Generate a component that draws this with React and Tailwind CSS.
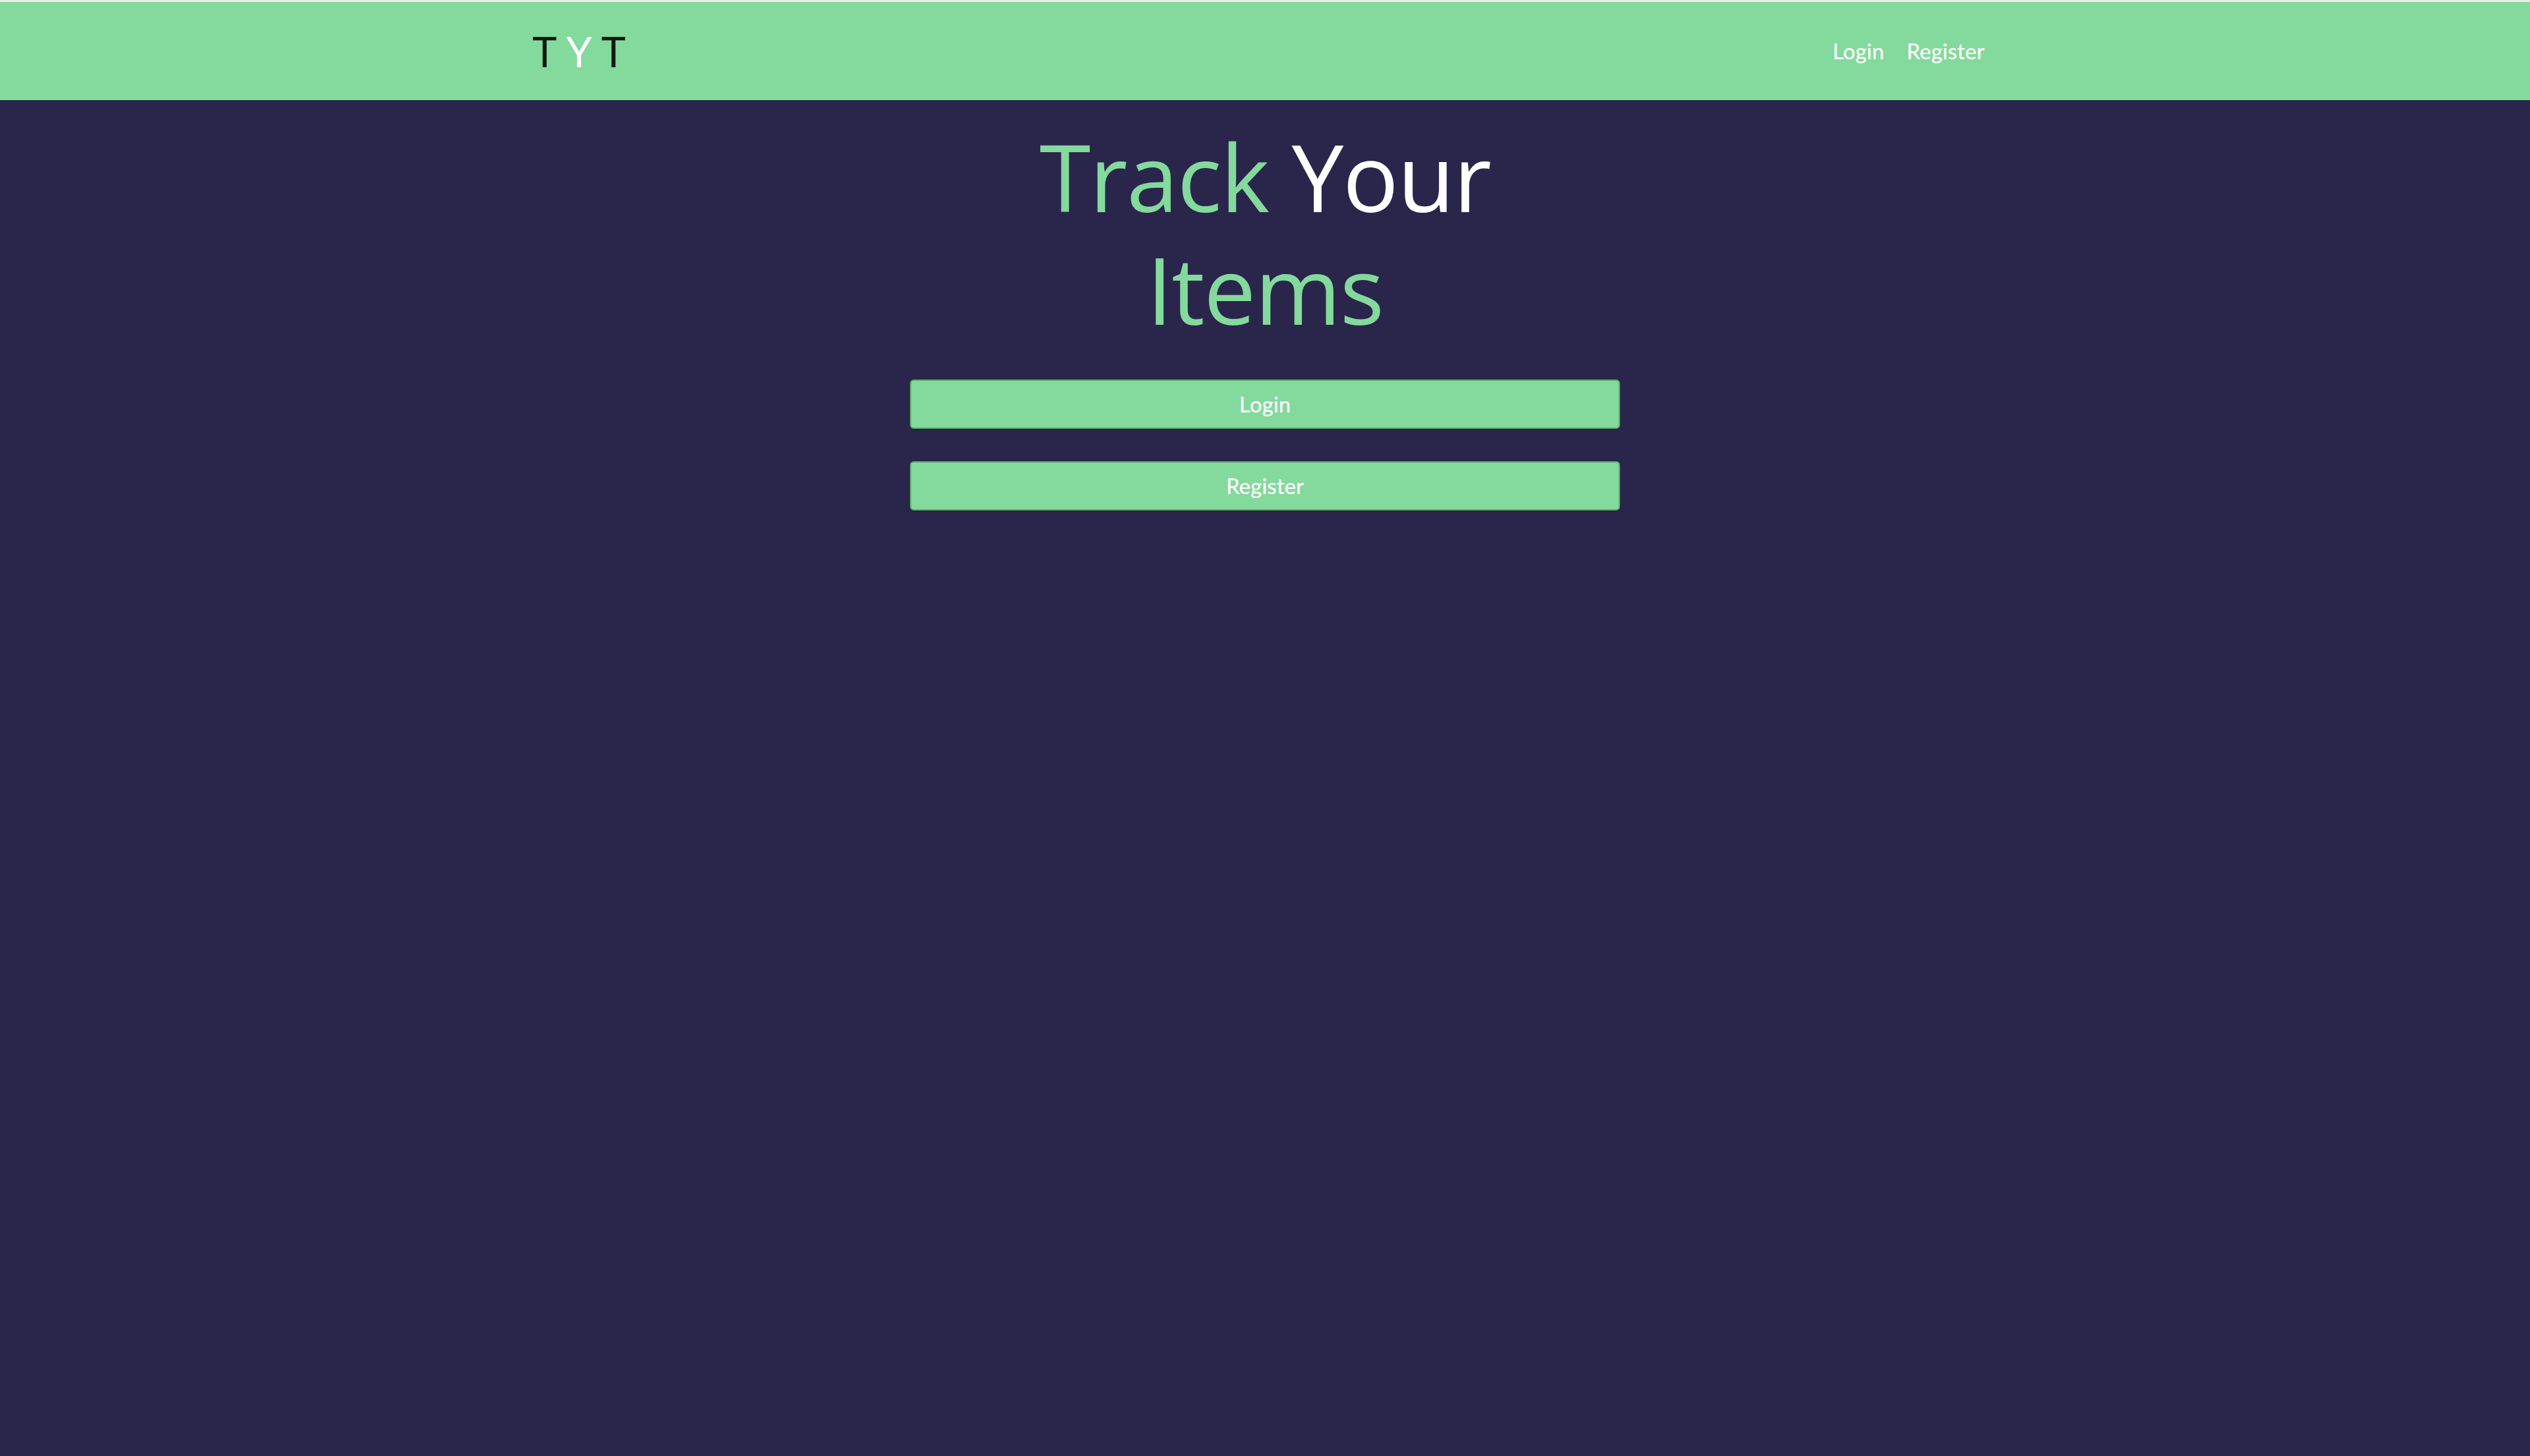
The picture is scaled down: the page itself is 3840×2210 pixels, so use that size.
export default function App() {
  const font = { fontFamily: 'Lato, "Open Sans", sans-serif' };
  const headFont = { fontFamily: '"Open Sans", Lato, sans-serif' };
  return (
    <div className="min-h-[2210px] w-full bg-[#2a264b] flex flex-col" style={font}>
      <div className="h-[3px] w-full bg-[#ececec]" />
      <header className="h-[149px] w-full bg-[#84d99c]">
        <div className="mx-auto flex h-full w-[2240px] items-center justify-between pl-[8px] pr-[28px]">
          <div className="flex items-center text-[63px] leading-none tracking-[14px] text-[#0f1a12]">
            <span>T</span>
            <span className="text-white">Y</span>
            <span>T</span>
          </div>
          <nav className="flex items-center gap-[34px] text-[33px] font-medium text-white">
            <a href="#">Login</a>
            <a href="#">Register</a>
          </nav>
        </div>
      </header>
      <main className="flex flex-col items-center">
        <h1
          className="mt-[30px] text-center text-[141px] font-normal leading-[171px] tracking-[-1.5px]"
          style={headFont}
        >
          <span className="block">
            <span className="text-[#84d99c]">Track</span>{' '}
            <span className="text-white">Your</span>
          </span>
          <span className="block text-[#84d99c]">Items</span>
        </h1>
        <div className="mt-[52px] flex w-[1078px] flex-col gap-[49px]">
          <button className="flex h-[75px] w-full items-center justify-center rounded-[6px] border-2 border-[#5aa565] bg-[#84d99c] text-[33px] font-medium text-white shadow-[0_1px_2px_rgba(0,0,0,0.3)]">
            Login
          </button>
          <button className="flex h-[75px] w-full items-center justify-center rounded-[6px] border-2 border-[#5aa565] bg-[#84d99c] text-[33px] font-medium text-white shadow-[0_1px_2px_rgba(0,0,0,0.3)]">
            Register
          </button>
        </div>
      </main>
    </div>
  );
}
